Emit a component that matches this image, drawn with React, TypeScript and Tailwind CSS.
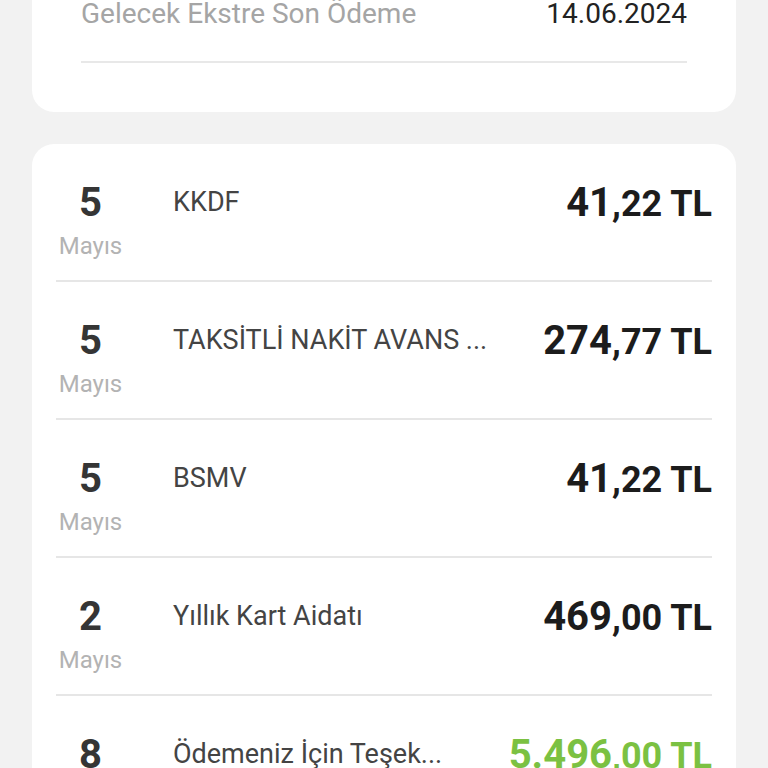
import React from "react";

type Item = {
  day: string;
  month: string;
  title: string;
  whole: string;
  cents: string;
  credit?: boolean;
};

const items: Item[] = [
  { day: "5", month: "Mayıs", title: "KKDF", whole: "41", cents: ",22 TL" },
  { day: "5", month: "Mayıs", title: "TAKSİTLİ NAKİT AVANS ...", whole: "274", cents: ",77 TL" },
  { day: "5", month: "Mayıs", title: "BSMV", whole: "41", cents: ",22 TL" },
  { day: "2", month: "Mayıs", title: "Yıllık Kart Aidatı", whole: "469", cents: ",00 TL" },
  { day: "8", month: "Mayıs", title: "Ödemeniz İçin Teşek...", whole: "5.496", cents: ",00 TL", credit: true },
];

function Row({ item }: { item: Item }) {
  return (
    <div className="border-b-2 border-[#e6e6e6]">
      <div className="flex items-start h-[136px] pt-[35px]">
        <div className="w-[69px] shrink-0 flex flex-col items-center">
          <span className="text-[40px] leading-[47px] font-bold text-[#353535]">{item.day}</span>
          <span className="mt-[6px] text-[24px] leading-[28px] text-[#b3b3b3]">{item.month}</span>
        </div>
        <div className="ml-[48px] mt-[7px] flex-1 min-w-0 whitespace-nowrap text-[27px] leading-[32px] text-[#444444]">
          {item.title}
        </div>
        <div
          className={
            item.credit
              ? "shrink-0 whitespace-nowrap font-bold leading-[47px] text-[#7bc142]"
              : "shrink-0 whitespace-nowrap font-bold leading-[47px] text-[#1c1c1c]"
          }
        >
          <span className="text-[40px]">{item.whole}</span>
          <span className="text-[36px]">{item.cents}</span>
        </div>
      </div>
    </div>
  );
}

export default function App() {
  return (
    <div className="h-[768px] overflow-hidden bg-[#f2f2f2] font-['Roboto',sans-serif]">
      <div className="mx-8 -mt-[20px] rounded-[22px] bg-white px-[49px] pt-[17px] pb-[49px]">
        <div className="flex items-start justify-between text-[28px] leading-[33px]">
          <span className="text-[#a5a5a5]">Gelecek Ekstre Son Ödeme</span>
          <span className="text-[#222222]">14.06.2024</span>
        </div>
        <div className="mt-[31px] h-[2px] bg-[#e8e8e8]" />
      </div>

      <div className="mx-8 mt-[32px] rounded-[22px] bg-white px-6">
        {items.map((item, i) => (
          <Row key={i} item={item} />
        ))}
      </div>
    </div>
  );
}
